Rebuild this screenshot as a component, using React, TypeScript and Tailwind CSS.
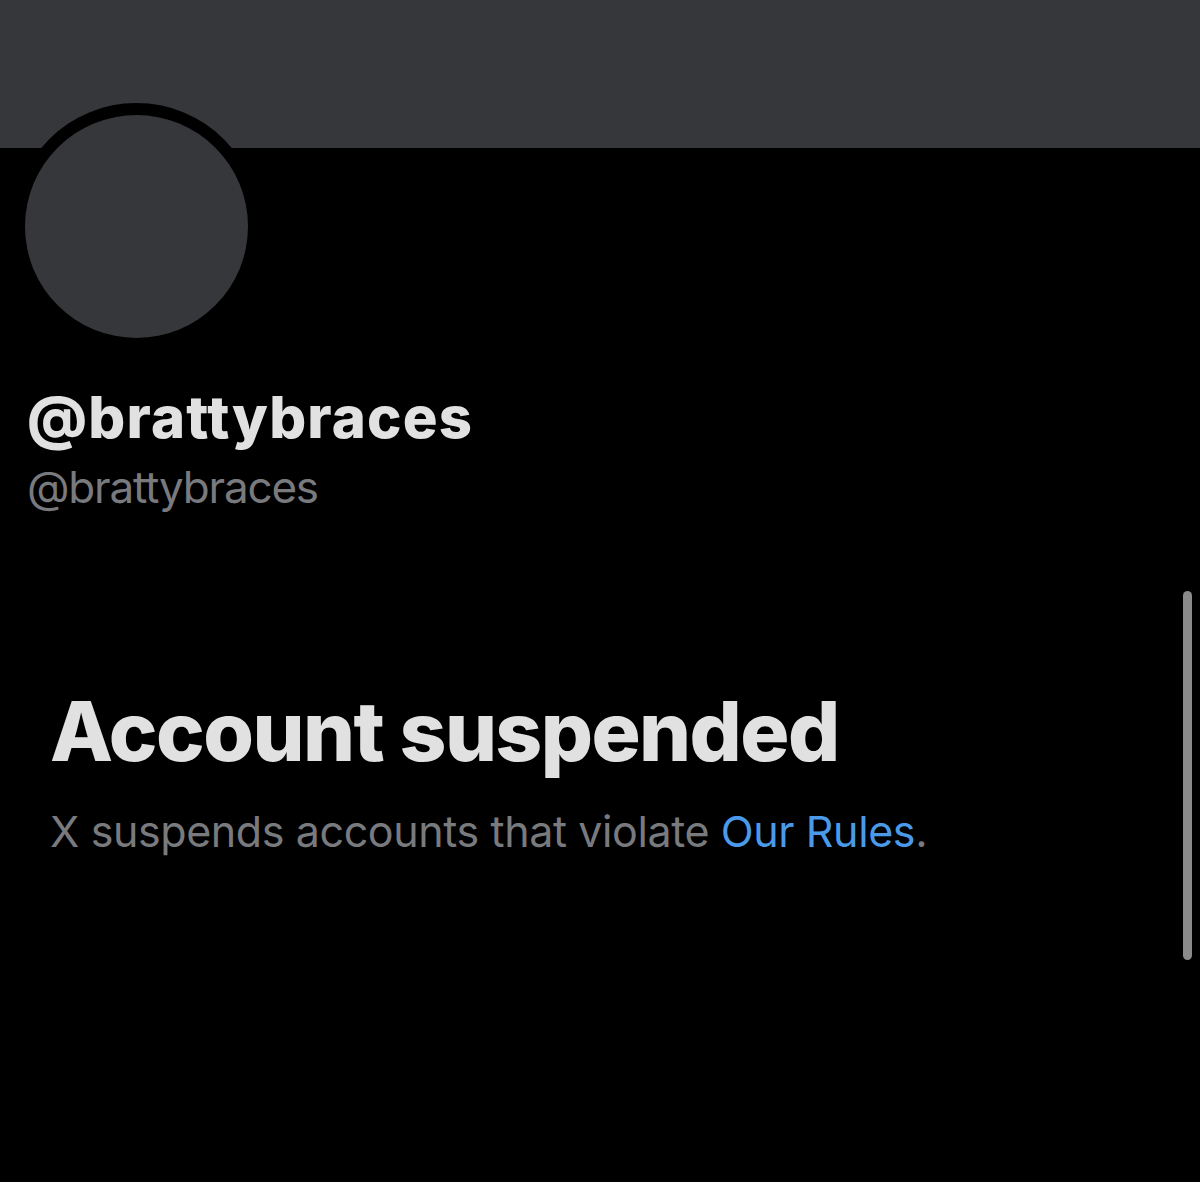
export default function App() {
  return (
    <div className="relative w-[1200px] h-[1182px] bg-black overflow-hidden" style={{ fontFamily: 'Inter, "Noto Sans", sans-serif' }}>
      <div className="h-[148px] bg-[#36373a]" />
      <div className="pl-[13px] -mt-[45px]">
        <div className="w-[247px] h-[247px] rounded-full bg-black p-[12px]">
          <div className="w-full h-full rounded-full bg-[#36373a]" />
        </div>
      </div>
      <div className="pl-[27px] mt-[35px]">
        <div className="text-[58px] leading-[64px] font-extrabold text-[#e1e1e1] tracking-[1.2px]">@brattybraces</div>
        <div className="mt-[13px] text-[44px] leading-[50px] text-[#797a7e] tracking-[-1.2px]">@brattybraces</div>
      </div>
      <div className="pl-[50px] mt-[172px]">
        <div className="text-[82px] leading-[96px] font-extrabold text-[#e1e1e1] tracking-[-1.6px]">Account suspended</div>
        <div className="mt-[23px] text-[43px] leading-[56px] text-[#797a7e] tracking-[-0.4px]">
          X suspends accounts that violate <span className="text-[#4a9ae9]">Our Rules</span>.
        </div>
      </div>
      <div className="absolute left-[1183px] top-[591px] w-[9px] h-[369px] rounded-full bg-[#8a8a8a]" />
    </div>
  );
}
